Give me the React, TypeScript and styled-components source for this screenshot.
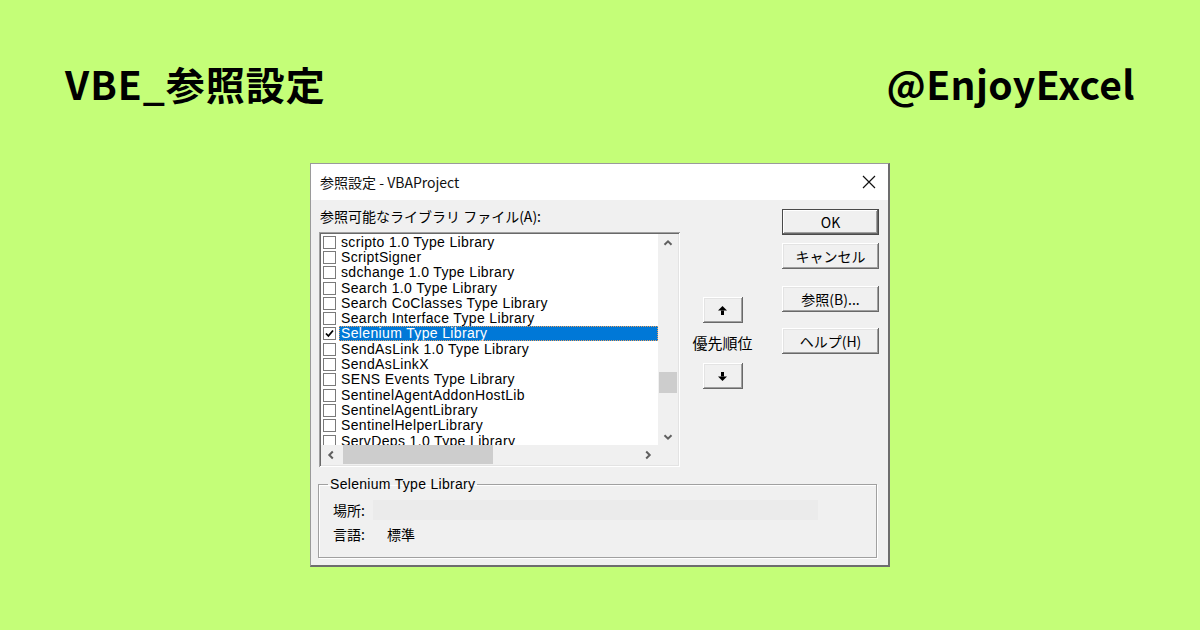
import styled, { createGlobalStyle, css } from "styled-components";

const jpFont = `"Noto Sans CJK JP", sans-serif`;
const listFont = `"Liberation Sans", "Noto Sans CJK JP", sans-serif`;

const GlobalStyle = createGlobalStyle`
  html, body {
    margin: 0;
    padding: 0;
  }
  body {
    width: 1200px;
    height: 630px;
    overflow: hidden;
    background: #c4fe78;
  }
`;

const Page = styled.div`
  width: 1200px;
  height: 630px;
  background: #c4fe78;
  display: flex;
  flex-direction: column;
`;

const Header = styled.header`
  display: flex;
  justify-content: space-between;
  align-items: center;
  padding: 60px 65px 0;
`;

const Heading = styled.h1`
  margin: 0;
  font: 700 39px/46px ${jpFont};
  color: #000;
  letter-spacing: 1px;
`;

const Handle = styled(Heading)`
  letter-spacing: 0.4px;
`;

const Dialog = styled.div`
  width: 580px;
  height: 404px;
  margin: 57px auto 0;
  box-sizing: border-box;
  background: #f0f0f0;
  border: 1px solid #9a9a9a;
  border-right: 2px solid #6d6d6d;
  border-bottom: 2px solid #6d6d6d;
  display: flex;
  flex-direction: column;
`;

const TitleBar = styled.div`
  height: 36px;
  flex: none;
  background: #fff;
  display: flex;
  align-items: center;
  justify-content: space-between;
  padding: 0 12px 0 9px;
  font: 14px ${jpFont};
  color: #111;
`;

const Body = styled.div`
  flex: 1;
  padding: 8px 9px 7px 8px;
  display: flex;
  flex-direction: column;
`;

const TopRow = styled.div`
  display: flex;
`;

const ListColumn = styled.div`
  width: 361px;
  flex: none;
  display: flex;
  flex-direction: column;
`;

const FieldLabel = styled.div`
  height: 24px;
  padding-left: 1px;
  font: 14px/16px ${jpFont};
  color: #000;
`;

const ListFrame = styled.div`
  width: 361px;
  height: 235px;
  box-sizing: border-box;
  padding: 2px;
  box-shadow: inset 1px 1px #a0a0a0, inset -1px -1px #fff, inset 2px 2px #696969,
    inset -2px -2px #e3e3e3;
  display: grid;
  grid-template-columns: 1fr 20px;
  grid-template-rows: 1fr 20px;
`;

const List = styled.div`
  background: #fff;
  overflow: hidden;
  padding-top: 0.5px;
`;

const Row = styled.div`
  height: 15.3px;
  display: flex;
  align-items: center;
  padding-left: 2px;
  white-space: nowrap;
`;

const Check = styled.span`
  width: 13px;
  height: 13px;
  box-sizing: border-box;
  border: 1px solid #7a7a7a;
  background: #fff;
  flex: none;
  display: flex;
  align-items: center;
  justify-content: center;
`;

const RowText = styled.span<{ $selected?: boolean }>`
  flex: 1;
  margin-left: 3px;
  padding-left: 2px;
  height: 15px;
  font: 14px/15px ${listFont};
  letter-spacing: 0.35px;
  color: #000;
  ${(p) =>
    p.$selected &&
    css`
      background: #0078d7;
      color: #fff;
      outline: 1px dotted #e8a060;
      outline-offset: -1px;
    `}
`;

const VScroll = styled.div`
  background: #f0f0f0;
  display: flex;
  flex-direction: column;
`;

const HScroll = styled.div`
  background: #f0f0f0;
  display: flex;
  align-items: stretch;
`;

const Corner = styled.div`
  background: #f0f0f0;
`;

const ArrowCell = styled.div<{ $size: number; $full?: boolean }>`
  flex: none;
  width: ${(p) => (p.$full ? "100%" : `${p.$size}px`)};
  min-height: ${(p) => p.$size}px;
  display: flex;
  align-items: center;
  justify-content: center;
`;

const VTrack = styled.div`
  flex: 1;
  padding: 0 1px;
`;

const VThumb = styled.div<{ $offset: number }>`
  margin-top: ${(p) => p.$offset}px;
  height: 21px;
  background: #cdcdcd;
`;

const HTrack = styled.div`
  flex: 1;
  padding: 0 0 1px 2px;
`;

const HThumb = styled.div<{ $offset: number }>`
  margin-left: ${(p) => p.$offset}px;
  width: 150px;
  height: 19px;
  background: #cdcdcd;
`;

const PriorityColumn = styled.div`
  width: 85px;
  flex: none;
  padding-right: 17px;
  padding-top: 89px;
  display: flex;
  flex-direction: column;
  align-items: center;
`;

const Button3D = css`
  box-sizing: border-box;
  background: #f0f0f0;
  box-shadow: inset -1px -1px #696969, inset 1px 1px #fff, inset -2px -2px #a0a0a0,
    inset 2px 2px #e3e3e3;
  display: flex;
  align-items: center;
  justify-content: center;
`;

const ArrowButton = styled.div`
  ${Button3D}
  width: 40px;
  height: 26px;
`;

const PriorityLabel = styled.div`
  margin: 10px 0;
  font: 15px/20px ${jpFont};
  color: #000;
`;

const ButtonColumn = styled.div`
  width: 97px;
  flex: none;
  padding-top: 1px;
  display: flex;
  flex-direction: column;
`;

const DialogButton = styled.div<{ $default?: boolean; $mt?: number }>`
  ${Button3D}
  width: 97px;
  height: 26px;
  margin-top: ${(p) => p.$mt ?? 0}px;
  font: 14px ${jpFont};
  color: #000;
  ${(p) =>
    p.$default &&
    css`
      box-shadow: inset 0 0 0 1px #4a4a4a, inset -2px -2px #696969, inset 2px 2px #fff,
        inset -3px -3px #a0a0a0;
    `}
`;

const Group = styled.fieldset`
  margin: 9px 2px 0 -1px;
  padding: 8px 12px 13px 14px;
  border: 1px solid #a0a0a0;
  box-shadow: 1px 1px 0 #fff, inset 1px 1px 0 #fff;
  min-width: 0;
  display: flex;
  flex-direction: column;
  gap: 4px;
`;

const Legend = styled.legend`
  margin-left: -5px;
  padding: 0 2px;
  font: 14px/16px ${listFont};
  letter-spacing: 0.3px;
  color: #000;
`;

const InfoRow = styled.div`
  display: flex;
  align-items: center;
  height: 20px;
  font: 14px ${jpFont};
  color: #000;
`;

const InfoLabel = styled.span<{ $width: number }>`
  width: ${(p) => p.$width}px;
  flex: none;
`;

const ReadOnlyBox = styled.div`
  width: 445px;
  height: 20px;
  background: #ebebeb;
`;

const Chevron = ({ dir }: { dir: "up" | "down" | "left" | "right" }) => {
  const rot = { up: 0, right: 90, down: 180, left: 270 }[dir];
  return (
    <svg width="10" height="10" viewBox="0 0 10 10" style={{ transform: `rotate(${rot}deg)` }}>
      <polyline points="1.5,6.8 5,3.3 8.5,6.8" fill="none" stroke="#606060" strokeWidth="2" />
    </svg>
  );
};

const Arrow = ({ down }: { down?: boolean }) => (
  <svg width="9" height="9" viewBox="0 0 9 9" style={down ? { transform: "rotate(180deg)" } : undefined}>
    <polygon points="4.5,0 9,4.5 0,4.5" fill="#000" />
    <rect x="3" y="4.5" width="3" height="4.5" fill="#000" />
  </svg>
);

const libraries = [
  "scripto 1.0 Type Library",
  "ScriptSigner",
  "sdchange 1.0 Type Library",
  "Search 1.0 Type Library",
  "Search CoClasses Type Library",
  "Search Interface Type Library",
  "Selenium Type Library",
  "SendAsLink 1.0 Type Library",
  "SendAsLinkX",
  "SENS Events Type Library",
  "SentinelAgentAddonHostLib",
  "SentinelAgentLibrary",
  "SentinelHelperLibrary",
  "ServDeps 1.0 Type Library",
];

const selected = "Selenium Type Library";

export default function App() {
  return (
    <Page>
      <GlobalStyle />
      <Header>
        <Heading>VBE_参照設定</Heading>
        <Handle>@EnjoyExcel</Handle>
      </Header>

      <Dialog>
        <TitleBar>
          <span>参照設定 - VBAProject</span>
          <svg width="14" height="14" viewBox="0 0 14 14">
            <path d="M1 1 L13 13 M13 1 L1 13" stroke="#111" strokeWidth="1.2" />
          </svg>
        </TitleBar>

        <Body>
          <TopRow>
            <ListColumn>
              <FieldLabel>参照可能なライブラリ ファイル(A):</FieldLabel>
              <ListFrame>
                <List>
                  {libraries.map((name) => (
                    <Row key={name}>
                      <Check>
                        {name === selected && (
                          <svg width="9" height="9" viewBox="0 0 9 9">
                            <polyline points="1,4.5 3.4,7 8,1.5" fill="none" stroke="#000" strokeWidth="1.8" />
                          </svg>
                        )}
                      </Check>
                      <RowText $selected={name === selected}>{name}</RowText>
                    </Row>
                  ))}
                </List>
                <VScroll>
                  <ArrowCell $size={17} $full>
                    <Chevron dir="up" />
                  </ArrowCell>
                  <VTrack>
                    <VThumb $offset={121} />
                  </VTrack>
                  <ArrowCell $size={17} $full>
                    <Chevron dir="down" />
                  </ArrowCell>
                </VScroll>
                <HScroll>
                  <ArrowCell $size={20}>
                    <Chevron dir="left" />
                  </ArrowCell>
                  <HTrack>
                    <HThumb $offset={0} />
                  </HTrack>
                  <ArrowCell $size={20}>
                    <Chevron dir="right" />
                  </ArrowCell>
                </HScroll>
                <Corner />
              </ListFrame>
            </ListColumn>

            <PriorityColumn>
              <ArrowButton>
                <Arrow />
              </ArrowButton>
              <PriorityLabel>優先順位</PriorityLabel>
              <ArrowButton>
                <Arrow down />
              </ArrowButton>
            </PriorityColumn>

            <ButtonColumn>
              <DialogButton $default>OK</DialogButton>
              <DialogButton $mt={8}>キャンセル</DialogButton>
              <DialogButton $mt={17}>参照(B)...</DialogButton>
              <DialogButton $mt={16}>ヘルプ(H)</DialogButton>
            </ButtonColumn>
          </TopRow>

          <Group>
            <Legend>Selenium Type Library</Legend>
            <InfoRow>
              <InfoLabel $width={40}>場所:</InfoLabel>
              <ReadOnlyBox />
            </InfoRow>
            <InfoRow>
              <InfoLabel $width={54}>言語:</InfoLabel>
              <span>標準</span>
            </InfoRow>
          </Group>
        </Body>
      </Dialog>
    </Page>
  );
}
